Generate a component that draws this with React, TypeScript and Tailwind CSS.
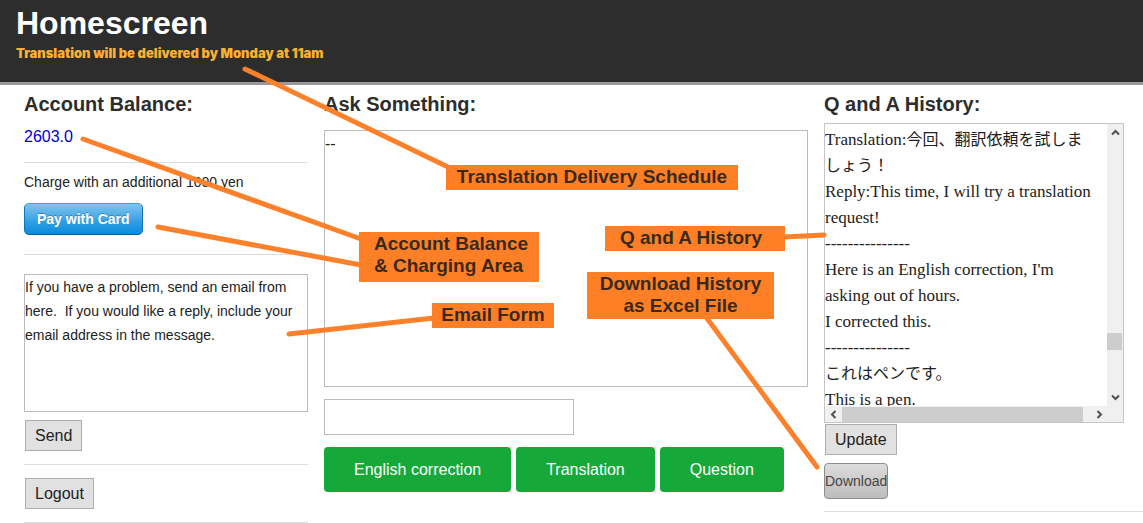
import { useState } from "react";
import type { ReactNode } from "react";

const boxButton =
  "ml-px h-[31px] self-start border border-[#adadad] bg-[#e1e1e1] px-[9px] text-base leading-none text-[#222]";
const actionButton =
  "h-[45px] rounded bg-[#17a83a] px-[30px] text-base leading-none text-white";
const heading = "text-xl leading-7 font-bold text-[#2d2d2d]";

const historyLines: { en?: string; ja?: string }[] = [
  { en: "Translation:", ja: "今回、翻訳依頼を試しましょう！" },
  { en: "Reply:This time, I will try a translation request!" },
  { en: "---------------" },
  { en: "Here is an English correction, I'm asking out of hours." },
  { en: "I corrected this." },
  { en: "---------------" },
  { ja: "これはペンです。" },
  { en: "This is a pen." },
];

function Chevron({ d }: { d: string }) {
  return (
    <svg viewBox="0 0 15 15" className="size-[15px]" fill="none" stroke="#505050" strokeWidth="2">
      <path d={d} />
    </svg>
  );
}

function Rule() {
  return <hr className="border-t border-[#dddddd]" />;
}

function History() {
  return (
    <div className="grid h-[300px] w-full max-w-[300px] grid-cols-[1fr_16px] border border-[#c5c5c5] bg-white">
      <div className="flex min-w-0 flex-col overflow-hidden">
        <div className="h-[282px] overflow-hidden pt-[3px] pr-3 font-['Liberation_Serif','Noto_Sans_CJK_JP',serif] text-[17px] leading-[26px] text-[#222]">
          {historyLines.map((line, i) => (
            <p key={i}>
              {line.en}
              {line.ja && (
                <span lang="ja" className="align-top text-base leading-[26px]">
                  {line.ja}
                </span>
              )}
            </p>
          ))}
        </div>
        <div className="flex h-4 items-center bg-[#f0f0f0]">
          <button aria-label="Scroll left" className="flex w-[17px] justify-center">
            <Chevron d="M9.5 4 6 7.5 9.5 11" />
          </button>
          <div className="h-[15px] flex-1 bg-[#cdcdcd]" />
          <button aria-label="Scroll right" className="flex w-6 justify-center pl-2">
            <Chevron d="M5.5 4 9 7.5 5.5 11" />
          </button>
        </div>
      </div>
      <div className="flex flex-col items-center bg-[#f0f0f0]">
        <button aria-label="Scroll up" className="flex h-[17px] items-center">
          <Chevron d="M4 9.5 7.5 6 11 9.5" />
        </button>
        <div className="flex w-full flex-1 flex-col pr-px">
          <div className="grow-[191]" />
          <div className="h-[17px] bg-[#cdcdcd]" />
          <div className="grow-[39]" />
        </div>
        <button aria-label="Scroll down" className="mb-4 flex h-[17px] items-center">
          <Chevron d="M4 5.5 7.5 9 11 5.5" />
        </button>
      </div>
    </div>
  );
}

function Callout({ place, children }: { place: string; children: ReactNode }) {
  return (
    <div
      className={
        "absolute flex justify-center bg-[#ff7f27] pt-px text-[19px] leading-[22px] font-bold whitespace-nowrap text-[#3a2a1c] " +
        place
      }
    >
      {children}
    </div>
  );
}

function Callouts() {
  return (
    <div className="pointer-events-none absolute top-0 left-0">
      <svg className="absolute top-0 left-0 h-[523px] w-[1143px] max-w-none" fill="none" stroke="#fd812b" strokeWidth="5" strokeLinecap="round">
        <path d="M245 69 448 167M83 139 361 239M158 227 361 265M289 334 434 318M784 237 824 235M706 317 817 467" />
      </svg>
      <Callout place="left-[446px] top-[165px] h-[25px] w-[292px]">Translation Delivery Schedule</Callout>
      <Callout place="left-[359px] top-[232px] h-[50px] w-[180px] pl-1">
        <p>
          Account Balance
          <br />
          &amp; Charging Area
        </p>
      </Callout>
      <Callout place="left-[432px] top-[303px] h-[25px] w-[122px]">Email Form</Callout>
      <Callout place="left-[605px] top-[226px] h-[25px] w-[180px] pr-2">Q and A History</Callout>
      <Callout place="left-[587px] top-[272px] h-[47px] w-[187px] text-center">
        <p>
          Download History
          <br />
          as Excel File
        </p>
      </Callout>
    </div>
  );
}

export default function App() {
  const [question, setQuestion] = useState("--");
  const [message, setMessage] = useState(
    "If you have a problem, send an email from here.  If you would like a reply, include your email address in the message."
  );
  const [title, setTitle] = useState("");

  return (
    <div className="relative overflow-x-hidden bg-white font-['Liberation_Sans',Arial,sans-serif] text-[#222]">
      <header className="h-[85px] border-b-[3px] border-[#999] bg-[#2d2d2d] px-4 pt-1">
        <h1 className="text-[32px] leading-[38px] font-bold text-white">Homescreen</h1>
        <p className="font-['Inter',sans-serif] text-[13px] leading-[22px] font-black text-[#fbb034]">
          Translation will be delivered by Monday at 11am
        </p>
      </header>

      <main className="grid grid-cols-[284fr_484fr_319fr] gap-4 pt-[5px] pl-6">
        <section className="flex flex-col">
          <h2 className={heading}>Account Balance:</h2>
          <a href="#balance" className="mt-[7px] mb-[13px] self-start text-base leading-6 text-[#0000cc]">
            2603.0
          </a>
          <Rule />
          <p className="mt-[7px] text-sm leading-6">Charge with an additional 1000 yen</p>
          <button className="mt-[9px] mb-[19px] h-8 self-start rounded-[5px] border border-[#1275b5] border-t-[#4ba0d4] border-b-[#0a5f98] bg-linear-to-b from-[#7dc5ee] via-[#2f9fe2] via-60% to-[#008cdd] px-3 text-sm leading-none font-bold text-white text-shadow-[0_-1px_0_rgb(0_0_0/0.25)]">
            Pay with Card
          </button>
          <Rule />
          <textarea
            aria-label="Email message"
            value={message}
            onChange={(e) => setMessage(e.target.value)}
            className="mt-[19px] mb-2 h-[138px] w-full resize-none overflow-hidden border border-[#bbb] text-sm leading-6 outline-none"
          />
          <button className={boxButton}>Send</button>
          <div className="mt-[13px] mb-[13px]">
            <Rule />
          </div>
          <button className={boxButton}>Logout</button>
          <div className="mt-[13px]">
            <Rule />
          </div>
        </section>

        <section className="flex flex-col items-start">
          <h2 id="ask" className={heading}>
            Ask Something:
          </h2>
          <textarea
            aria-labelledby="ask"
            value={question}
            onChange={(e) => setQuestion(e.target.value)}
            className="mt-3 h-[257px] w-full resize-none border border-[#bbb] text-base leading-[26px] outline-none"
          />
          <input
            aria-label="Title"
            type="text"
            value={title}
            onChange={(e) => setTitle(e.target.value)}
            className="mt-3 h-9 w-[250px] border border-[#bbb] px-2 outline-none"
          />
          <div className="mt-3 flex gap-[5px]">
            <button className={actionButton}>English correction</button>
            <button className={actionButton}>Translation</button>
            <button className={actionButton}>Question</button>
          </div>
        </section>

        <section className="flex flex-col">
          <h2 className={heading}>Q and A History:</h2>
          <div className="mt-[5px] mb-px">
            <History />
          </div>
          <button className={boxButton}>Update</button>
          <button className="mt-2 mb-3 h-9 self-start rounded border border-[#8c8c8c] bg-linear-to-b from-[#dcdcdc] to-[#bdbdbd] text-sm leading-none text-[#444]">
            Download
          </button>
          <Rule />
        </section>
      </main>

      <Callouts />
    </div>
  );
}
